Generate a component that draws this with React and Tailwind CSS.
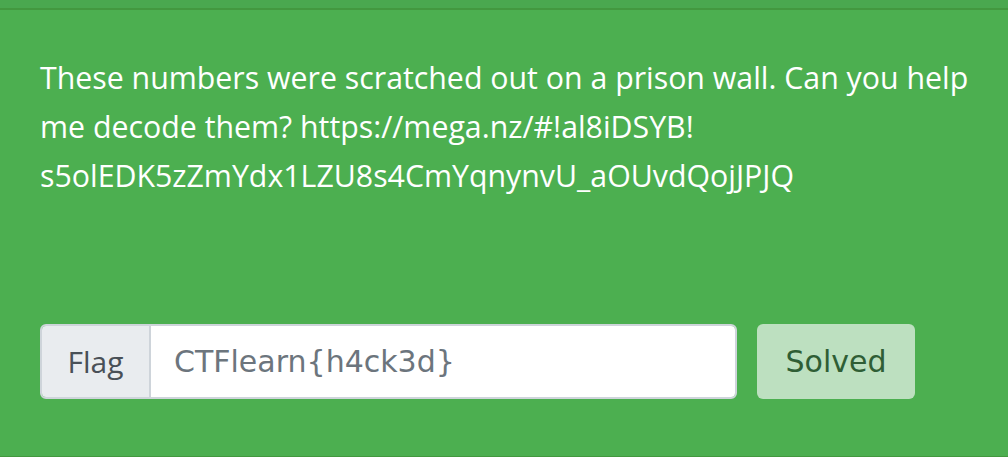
export default function App() {
  return (
    <div className="w-[1008px] h-[457px] bg-[#4caf50] flex flex-col overflow-hidden">
      <div className="h-[10px] bg-[#4aa84f] border-b-2 border-[#43983f] shrink-0" />
      <div className="flex-1 flex flex-col pl-[40px] pr-[20px] pt-[43px]">
        <p
          className="text-white text-[30.3px] leading-[49px] w-[945px]"
          style={{ fontFamily: '"Open Sans", "Noto Sans", sans-serif' }}
        >
          These numbers were scratched out on a prison wall. Can you help me decode them? https://mega.nz/#!al8iDSYB!
          s5olEDK5zZmYdx1LZU8s4CmYqnynvU_aOUvdQojJPJQ
        </p>
        <div className="flex items-stretch mt-[124px] h-[75px]">
          <div className="flex w-[697px] rounded-[6px] border-2 border-[#ced4da] overflow-hidden">
            <div
              className="w-[109px] shrink-0 bg-[#e9ecef] border-r-2 border-[#ced4da] flex items-center justify-center text-[#495057] text-[30px]"
              style={{ fontFamily: '"Open Sans", "Noto Sans", sans-serif' }}
            >
              Flag
            </div>
            <div
              className="flex-1 bg-white flex items-center pl-[23px] text-[#6c757d] text-[30px]"
              style={{ fontFamily: '"DejaVu Sans", sans-serif' }}
            >
              CTFlearn{'{'}h4ck3d{'}'}
            </div>
          </div>
          <button
            className="ml-[20px] w-[158px] rounded-[6px] bg-[#bde0c0] text-[#2f5e35] text-[30px] flex items-center justify-center"
            style={{ fontFamily: '"DejaVu Sans", sans-serif' }}
          >
            Solved
          </button>
        </div>
      </div>
      <div className="h-px bg-[#43983f] shrink-0" />
    </div>
  );
}
